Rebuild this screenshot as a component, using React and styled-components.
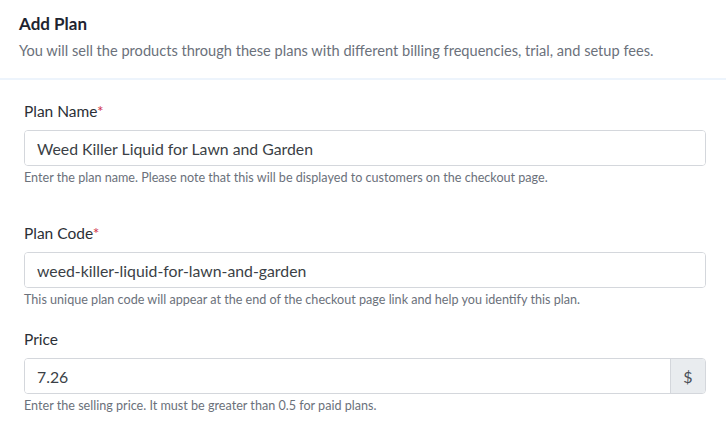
import React from "react";
import styled, { createGlobalStyle } from "styled-components";

const GlobalStyle = createGlobalStyle`
  * {
    box-sizing: border-box;
  }
  body {
    margin: 0;
    background: #fff;
    font-family: Lato, "Open Sans", sans-serif;
  }
`;

const Page = styled.div`
  width: 726px;
`;

const Header = styled.div`
  padding: 12px 19px 0 19px;
  height: 80px;
  border-bottom: 2px solid #edf4fc;
`;

const Title = styled.h2`
  margin: 0;
  font-size: 17px;
  font-weight: 700;
  color: #1e2430;
  line-height: 24px;
`;

const Subtitle = styled.p`
  margin: 5px 0 0 0;
  font-size: 14.6px;
  color: #6b717b;
  line-height: 20px;
`;

const Body = styled.div`
  padding: 21px 20px 0 24px;
`;

const Field = styled.div`
  margin-bottom: ${(p) => p.gap || 26}px;
`;

const Label = styled.div`
  font-size: 15.5px;
  color: #2b2f36;
  line-height: 20px;
  margin-bottom: 9px;
`;

const Req = styled.span`
  color: #d0334b;
`;

const InputGroup = styled.div`
  display: flex;
  height: 36px;
  border: 1px solid #d4d7dc;
  border-radius: 4px;
  overflow: hidden;
`;

const Input = styled.input`
  flex: 1;
  min-width: 0;
  border: 0;
  outline: none;
  padding: 0 12px;
  font-family: inherit;
  font-size: 15.8px;
  color: #3b3f46;
  background: #fff;
`;

const Addon = styled.div`
  width: 35px;
  display: flex;
  align-items: center;
  justify-content: center;
  background: #e9ecef;
  border-left: 1px solid #d4d7dc;
  color: #4a4f57;
  font-size: 16px;
`;

const Help = styled.div`
  font-size: 12.6px;
  color: #6b717b;
  line-height: 16px;
  margin-top: 4px;
`;

export default function App() {
  return (
    <Page>
      <GlobalStyle />
      <Header>
        <Title>Add Plan</Title>
        <Subtitle>
          You will sell the products through these plans with different billing
          frequencies, trial, and setup fees.
        </Subtitle>
      </Header>
      <Body>
        <Field gap={37}>
          <Label>
            Plan Name<Req>*</Req>
          </Label>
          <InputGroup>
            <Input defaultValue="Weed Killer Liquid for Lawn and Garden" />
          </InputGroup>
          <Help>
            Enter the plan name. Please note that this will be displayed to
            customers on the checkout page.
          </Help>
        </Field>
        <Field gap={21}>
          <Label>
            Plan Code<Req>*</Req>
          </Label>
          <InputGroup>
            <Input defaultValue="weed-killer-liquid-for-lawn-and-garden" />
          </InputGroup>
          <Help>
            This unique plan code will appear at the end of the checkout page
            link and help you identify this plan.
          </Help>
        </Field>
        <Field>
          <Label>Price</Label>
          <InputGroup>
            <Input defaultValue="7.26" />
            <Addon>$</Addon>
          </InputGroup>
          <Help>
            Enter the selling price. It must be greater than 0.5 for paid plans.
          </Help>
        </Field>
      </Body>
    </Page>
  );
}
